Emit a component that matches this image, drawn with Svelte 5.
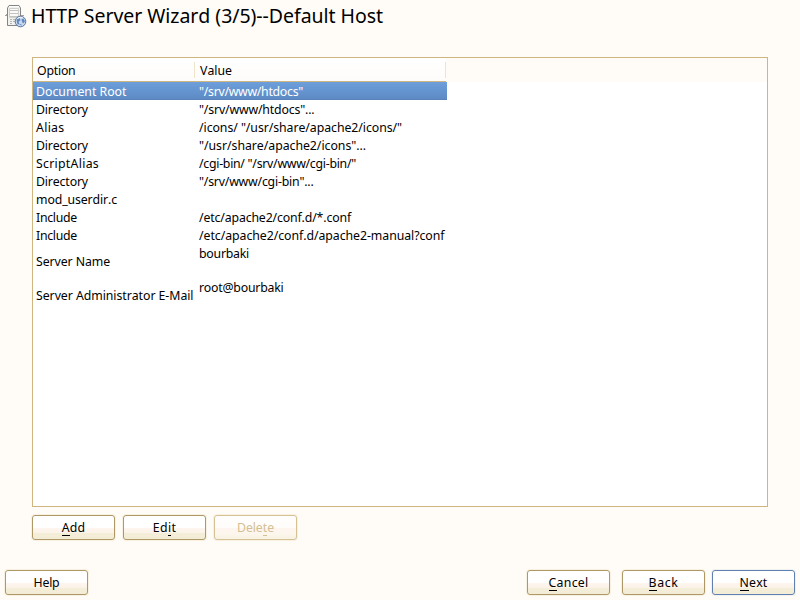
<script>
  const rows = [
    { option: 'Document Root', ow: 90.5, value: '"/srv/www/htdocs"', vw: 104, selected: true },
    { option: 'Directory', ow: 52, value: '"/srv/www/htdocs"...', vw: 115.5 },
    { option: 'Alias', ow: 28.5, value: '/icons/ "/usr/share/apache2/icons/"', vw: 203 },
    { option: 'Directory', ow: 52, value: '"/usr/share/apache2/icons"...', vw: 167 },
    { option: 'ScriptAlias', ow: 63, value: '/cgi-bin/ "/srv/www/cgi-bin/"', vw: 157 },
    { option: 'Directory', ow: 52, value: '"/srv/www/cgi-bin"...', vw: 114.5 },
    { option: 'mod_userdir.c', ow: 81, value: '', vw: 0 },
    { option: 'Include', ow: 41, value: '/etc/apache2/conf.d/*.conf', vw: 152 },
    { option: 'Include', ow: 41, value: '/etc/apache2/conf.d/apache2-manual?conf', vw: 245.5 },
    { option: 'Server Name', ow: 74, value: 'bourbaki', vw: 50, tall: true },
    { option: 'Server Administrator E-Mail', ow: 157.5, value: 'root@bourbaki', vw: 84.5, tall: true },
  ];

  // Spreads the letters of a label over a given width.
  function track(node, width) {
    const n = node.textContent.length;
    if (!n) return;
    const natural = node.getBoundingClientRect().width;
    node.style.letterSpacing = `${(width - natural) / n}px`;
  }
</script>

{#snippet btn(before, key, after, width, kind = '')}
  <button class="btn {kind}" disabled={kind === 'disabled'}><span class="label" use:track={width}>{before}{#if key}<span class="key">{key}</span>{/if}{after}</span></button>
{/snippet}

<main>
  <header>
    <svg width="22" height="24" viewBox="0 0 22 24">
      <path d="M0 10.500h19M1 9.500h2" stroke="#a5a5a2" />
      <path d="M2.500 20.500V3L4 .5h10L15.500 3v17.500z" fill="#f1f1ef" stroke="#858585" />
      <path d="M4 1.500h10" stroke="#fff" />
      <path d="M4.500 3.500h9v9h-9z" fill="#fafaf8" stroke="#d0d0cb" />
      <path d="M5 5.500h8M5 8.500h8M5 11.500h8" stroke="#c3c3be" />
      <path d="M5 14.500h2M8 14.500h2M5 16.500h2M8 16.500h2M5 18.500h2" stroke="#b9b9b4" />
      <circle cx="15.500" cy="16.500" r="5.300" fill="#c9d9ef" stroke="#58749f" />
      <path d="M11.500 14.500l3-1.500 1 2-2 2 1 2-2 .5zM16.500 14.500l2-1 1.500 3-2 2-1-2zM14 19.500l2-.5 1 1.500z" fill="#6088bd" />
      <path d="M12.500 13.500q2.500-2 5-1" stroke="#f4f8ff" fill="none" />
    </svg>
    <h1><span use:track={352}>HTTP Server Wizard (3/5)--Default Host</span></h1>
  </header>

  <section class="table">
    <div class="head">
      <div class="h c1"><span use:track={38.5}>Option</span></div>
      <div class="h c2"><span use:track={32}>Value</span></div>
      <div class="rest"></div>
    </div>
    {#each rows as r}
      <div class="row" class:selected={r.selected} class:tall={r.tall}>
        <div class="opt"><span use:track={r.ow}>{r.option}</span></div>
        <div class="val"><span use:track={r.vw}>{r.value}</span></div>
      </div>
    {/each}
  </section>

  <div class="actions">
    {@render btn('', 'A', 'dd', 23.5)}
    {@render btn('Ed', 'i', 't', 23.5)}
    {@render btn('Dele', 't', 'e', 37, 'disabled')}
  </div>

  <footer>
    {@render btn('Help', '', '', 26)}
    <div class="nav">
      {@render btn('', 'C', 'ancel', 40)}
      {@render btn('', 'B', 'ack', 30)}
      {@render btn('', 'N', 'ext', 28, 'primary')}
    </div>
  </footer>
</main>

<style>
  :global(body) { margin: 0; background: #fffcf7; }
  main {
    width: 800px; height: 600px; box-sizing: border-box; overflow: hidden;
    display: flex; flex-direction: column; background: #fffcf7; color: #000;
    font: 12.300px/18px "Noto Sans", sans-serif; font-kerning: none;
  }
  header { height: 57px; display: flex; align-items: flex-start; padding: 5px 0 0 5px; box-sizing: border-box; flex: none; }
  h1 { margin: 0 0 0 4px; font-size: 19.500px; line-height: 22px; font-weight: 400; white-space: nowrap; }
  .table { margin: 0 32px; height: 450px; box-sizing: border-box; border: 1px solid #cfb57f; background: #fff; flex: none; }
  .head { display: flex; height: 24px; }
  .h { box-sizing: border-box; padding: 4px 0 0 4px; background: linear-gradient(#fff, #fefcfa); border-bottom: 1px solid #cfb57f; position: relative; }
  .h::after { content: ''; position: absolute; right: 0; top: 4px; height: 16px; width: 1px; background: #f0e4cb; }
  .c1 { width: 162px; }
  .c2 { width: 251px; padding-left: 5px; }
  .rest { flex: 1; background: #fffcf7; }
  .row { height: 18px; width: 414px; display: flex; align-items: center; white-space: pre; }
  .row.tall { height: 34px; }
  .opt { width: 163px; padding: 2px 0 0 3px; box-sizing: border-box; }
  .val { padding: 1px 0 0 3px; align-self: flex-start; }
  .selected { background: linear-gradient(#6d9fda, #5c89c4); color: #fff; box-shadow: inset 0 -1px #5a83b9; }
  .actions { display: flex; gap: 8px; padding: 8px 0 0 32px; height: 63px; box-sizing: border-box; flex: none; }
  .btn {
    width: 83px; height: 25px; box-sizing: border-box; padding: 0; border: 1px solid #ae9865; border-radius: 3px;
    background: linear-gradient(#fff 0, #fff 50%, #fef5ef 53%, #fbf3e8 72%, #f4eed9 76%, #f3edd8 100%);
    color: #000; font: inherit; line-height: 23px; box-shadow: 0 0 0 1px #f8f1e2;
  }
  .key { box-shadow: 0 1px currentColor; display: inline-block; line-height: 14px; }
  .disabled { border-color: #d4c194; color: #d3bf91; background: linear-gradient(#fffefd 0, #fffdfa 50%, #fef5ef 53%, #fcf6ed 75%, #f8f2e3 100%); }
  .primary { border-color: #5f80b0; box-shadow: 0 0 0 1px #f1f1ed; }
  footer { display: flex; justify-content: space-between; padding: 0 5px; }
  .nav { display: flex; gap: 7px; }
  .nav > :global(:first-child) { margin-right: 5px; }
</style>
